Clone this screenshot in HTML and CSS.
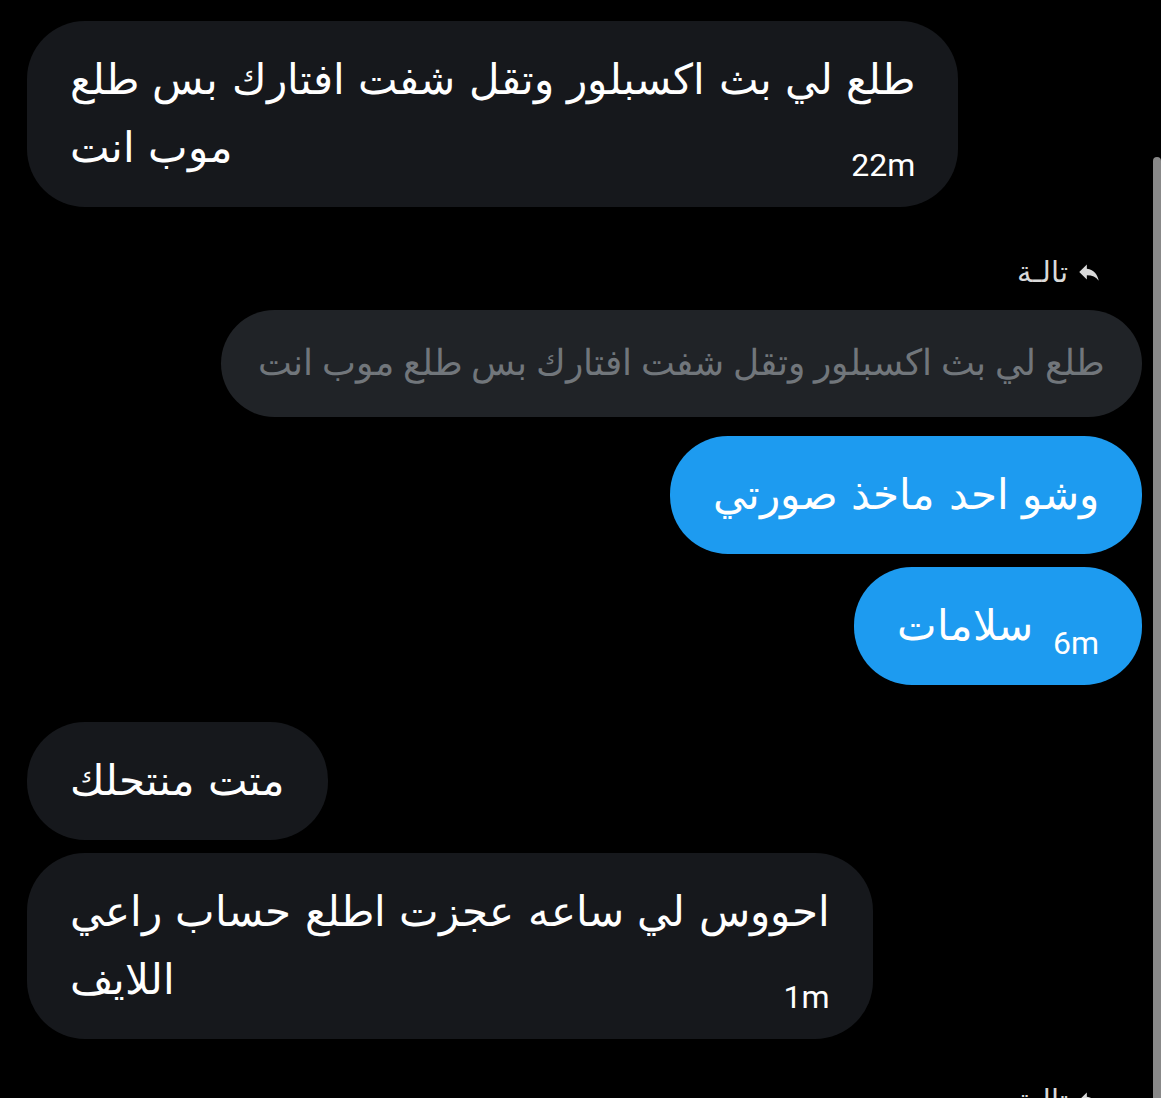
FILE: index.html
```html
<!DOCTYPE html>
<html lang="ar">
<head>
    <meta charset="UTF-8">
    <meta name="viewport" content="width=device-width, initial-scale=1.0">
    <title>الرسائل</title>
    <link rel="stylesheet" href="styles.css">
</head>
<body>
    <div class="chat">
        <div class="msg received">
            <div class="bubble">طلع لي بث اكسبلور وتقل شفت افتارك بس طلع<br>موب انت<span class="time">22m</span></div>
        </div>

        <div class="reply-label">
            <span>تالـة</span>
            <svg viewBox="0 0 24 24" class="reply-icon"><path d="M10 9V5l-7 7 7 7v-4.1c5 0 8.5 1.6 11 5.1-1-5-4-10-11-11z"/></svg>
        </div>
        <div class="msg sent">
            <div class="quote">طلع لي بث اكسبلور وتقل شفت افتارك بس طلع موب انت</div>
        </div>
        <div class="msg sent gap-s">
            <div class="bubble blue">وشو احد ماخذ صورتي</div>
        </div>
        <div class="msg sent gap-xs">
            <div class="bubble blue">سلامات<span class="time">6m</span></div>
        </div>

        <div class="msg received gap-l">
            <div class="bubble">متت منتحلك</div>
        </div>
        <div class="msg received gap-xs">
            <div class="bubble">احووس لي ساعه عجزت اطلع حساب راعي<br>اللايف<span class="time">1m</span></div>
        </div>

        <div class="reply-label last">
            <span>تالـة</span>
            <svg viewBox="0 0 24 24" class="reply-icon"><path d="M10 9V5l-7 7 7 7v-4.1c5 0 8.5 1.6 11 5.1-1-5-4-10-11-11z"/></svg>
        </div>
    </div>
    <div class="scrollbar"></div>
</body>
</html>
```

FILE: styles.css
```css
body {
    margin: 0;
    background: #000;
    color: #e7e9ea;
    font-family: Roboto, "Noto Sans", sans-serif;
    height: 1098px;
    overflow: hidden;
}
.chat {
    display: flex;
    flex-direction: column;
    padding: 21px 19px 0 27px;
}
.msg {
    display: flex;
}
.received {
    justify-content: flex-start;
}
.sent {
    justify-content: flex-end;
}
.gap-xs { margin-top: 13px; }
.gap-s { margin-top: 19px; }
.gap-l { margin-top: 37px; }

.bubble {
    background: #16181c;
    color: #fff;
    font-size: 42px;
    word-spacing: 3px;
    line-height: 68px;
    padding: 25px 43px;
    border-radius: 58px;
    max-width: 1000px;
}
.bubble.blue {
    background: #1d9bf0;
}
.time {
    float: right;
    font-size: 32px;
    word-spacing: 0;
    line-height: 32px;
    margin: 35px 0 0 20px;
}

.reply-label {
    display: flex;
    justify-content: flex-end;
    align-items: center;
    gap: 8px;
    margin: 50px 40px 0 0;
    font-size: 29px;
    line-height: 30px;
    color: #d9d9d9;
}
.reply-label.last {
    margin-top: 46px;
}
.reply-icon {
    width: 26px;
    height: 26px;
    fill: #d9d9d9;
}
.quote {
    margin-top: 23px;
    background: #202327;
    color: #71767b;
    font-size: 36px;
    line-height: 57px;
    padding: 25px 37px;
    border-radius: 54px;
}
.scrollbar {
    position: absolute;
    top: 157px;
    right: 0;
    width: 8px;
    height: 941px;
    background: #888;
    border-radius: 4px 4px 0 0;
}
```
